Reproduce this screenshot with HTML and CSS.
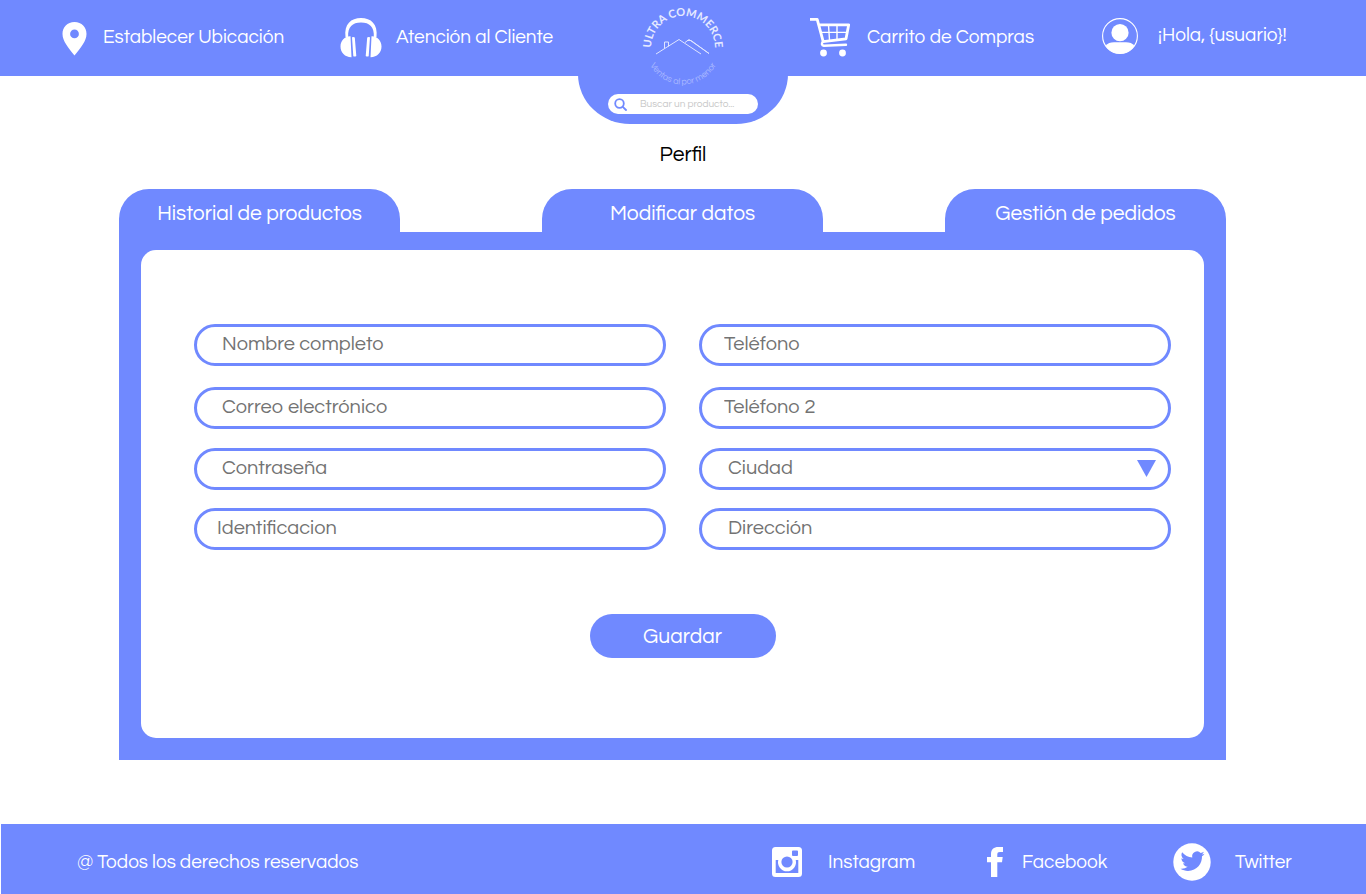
FILE: index.html
```html
<!DOCTYPE html>
<html lang="es">
<head>
<meta charset="utf-8">
<meta name="viewport" content="width=device-width, initial-scale=1">
<title>Perfil - Ultra Commerce</title>
<link rel="stylesheet" href="styles.css">
</head>
<body>
<header class="topbar">
  <a class="nav-link nav-link--location" href="#">
    <svg width="25" height="34" viewBox="0 -1 25 34" overflow="visible" fill="currentColor" aria-hidden="true"><path fill-rule="evenodd" d="M12.500 0C5.300 0 0.500 5 0.500 12c0 7 6 14 12 21.500 6-7.500 12-14.500 12-21.500 0-7-4.800-12-12-12zm0 7.500a4.400 4.400 0 1 1 0 8.800 4.400 4.400 0 0 1 0-8.800z"/></svg>
    <span class="nav-text">Establecer Ubicación</span>
  </a>
  <a class="nav-link nav-link--support" href="#">
    <svg width="42" height="40" viewBox="0 0 42 40" fill="currentColor" aria-hidden="true">
      <path d="M5.500 19C4 6 11 0 21 0s17 6 15.500 19h-2.700C34.500 9 29.500 4.500 21 4.500S7.500 9 8.200 19z"/>
      <path d="M10.500 18.300C5 18 .5 22.500 .5 28.500S5 39.300 11.500 39.200zM31.500 18.300C37 18 41.500 22.500 41.500 28.500S37 39.300 30.500 39.200z"/>
      <path d="M12 19.300q2-.6 2.800.2L16.300 38q-1.400 1-3 .2zM30 19.300q-2-.6-2.800.2L25.700 38q1.400 1 3 .2z"/>
    </svg>
    <span class="nav-text">Atención al Cliente</span>
  </a>
  <div class="brand">
    <a class="brand-logo" href="#">
      <svg width="92" height="86" viewBox="0 0 92 86" role="img" aria-label="Ultra Commerce">
        <path id="arc-top" fill="none" d="M14 52V48A32 32 0 1 1 78 48V52"/>
        <path id="arc-bottom" fill="none" d="M8.500 47A37.500 37.500 0 0 0 83.500 47"/>
        <text class="brand-name"><textPath href="#arc-top" startOffset="50%" text-anchor="middle">ULTRA COMMERCE</textPath></text>
        <text class="brand-tagline"><textPath href="#arc-bottom" startOffset="50%" text-anchor="middle">Ventas al por menor</textPath></text>
        <path fill="none" stroke="#dfe5ff" stroke-width="1" d="M19 54l23-14.500L64 54M27.500 48.500V42h4v4.500M48 42.500l4-3L72 53.500M50 40.500h4l18 13"/>
      </svg>
    </a>
    <form class="search" role="search">
      <svg width="13" height="13" viewBox="0 0 13 13" fill="none" stroke="currentColor" stroke-width="1.800" stroke-linecap="round" aria-hidden="true"><circle cx="5.500" cy="5.500" r="4.300"/><path d="M8.800 8.800l3.200 3.200"/></svg>
      <input class="search-input" type="search" placeholder="Buscar un producto..." aria-label="Buscar un producto">
    </form>
  </div>
  <a class="nav-link nav-link--cart" href="#">
    <svg width="42" height="40" viewBox="0 1 42 40" fill="none" stroke="currentColor" aria-hidden="true">
      <path stroke-width="2.800" stroke-linejoin="round" d="M1 2.400h7.200l6 22.200L37 21.800 39.700 7.800H10"/>
      <path stroke-width="1.400" d="M19.500 8l1 15M28 8v15M11.500 15.400h27"/>
      <path stroke-width="2.400" stroke-linecap="round" d="M14 24.500c-1.800 2-1.300 4 .8 4.200l22.200-.900"/>
      <circle cx="14.500" cy="36" r="3.400" fill="currentColor" stroke="none"/><circle cx="33.500" cy="36" r="3.400" fill="currentColor" stroke="none"/>
    </svg>
    <span class="nav-text">Carrito de Compras</span>
  </a>
  <a class="nav-link nav-link--user" href="#">
    <svg width="36" height="36" viewBox="0 0 36 36" aria-hidden="true">
      <circle cx="18" cy="18" r="17.400" fill="none" stroke="currentColor" stroke-width="1.100"/>
      <circle cx="18" cy="14.700" r="8.600" fill="currentColor"/>
      <path fill="currentColor" d="M3.500 28C5.500 25.300 8.500 24.300 12 24.300h12c3.500 0 6.500 1 8.500 3.700A17.500 17.500 0 0 1 3.500 28z"/>
    </svg>
    <span class="nav-text">¡Hola, {usuario}!</span>
  </a>
</header>

<main class="page">
  <h1 class="page-title">Perfil</h1>
  <nav class="tabs" aria-label="Perfil">
    <button class="tab tab--history" type="button">Historial de productos</button>
    <button class="tab tab--edit" type="button">Modificar datos</button>
    <button class="tab tab--orders" type="button">Gestión de pedidos</button>
  </nav>
  <section class="panel">
    <form class="profile">
      <div class="fields">
        <input class="field" type="text" placeholder="Nombre completo" aria-label="Nombre completo">
        <input class="field field--phone" type="tel" placeholder="Teléfono" aria-label="Teléfono">
        <input class="field" type="email" placeholder="Correo electrónico" aria-label="Correo electrónico">
        <input class="field field--phone" type="tel" placeholder="Teléfono 2" aria-label="Teléfono 2">
        <input class="field" type="password" placeholder="Contraseña" aria-label="Contraseña">
        <div class="select-wrap">
          <select class="field field--inset" aria-label="Ciudad"><option>Ciudad</option></select>
          <svg class="select-arrow" width="20" height="18" viewBox="0 0 20 18" aria-hidden="true"><path fill="currentColor" d="M0 0h19L9.500 17z"/></svg>
        </div>
        <input class="field field--id" type="text" placeholder="Identificacion" aria-label="Identificacion">
        <input class="field field--inset" type="text" placeholder="Dirección" aria-label="Dirección">
      </div>
      <button class="save" type="submit">Guardar</button>
    </form>
  </section>
</main>

<footer class="footer">
  <p class="copyright">@ Todos los derechos reservados</p>
  <a class="social social--instagram" href="#">
    <svg width="30" height="30" viewBox="0 0 30 30" aria-hidden="true">
      <path fill="currentColor" fill-rule="evenodd" d="M3.500 0h23A3.500 3.500 0 0 1 30 3.500v23a3.500 3.500 0 0 1-3.500 3.500h-23A3.500 3.500 0 0 1 0 26.500v-23A3.500 3.500 0 0 1 3.500 0zM21 3.500q-1 0-1 1V8q0 1 1 1h4q1 0 1-1V4.500q0-1-1-1zM3.700 13v13h22.600V13h-2.600A9 9 0 1 1 6.300 13z"/>
      <circle cx="15" cy="15" r="5.600" fill="#7089ff"/>
    </svg>
    <span>Instagram</span>
  </a>
  <a class="social social--facebook" href="#">
    <svg width="16" height="30" viewBox="0 0 16 30" fill="currentColor" aria-hidden="true"><path d="M4 30V15.200H0V10h4V7.200C4 2.500 6.800 0 11.300 0H16v5h-3c-2 0-2.700.8-2.700 2.500V10H15.700L15 15.200h-4.700V30z"/></svg>
    <span>Facebook</span>
  </a>
  <a class="social social--twitter" href="#">
    <svg width="38" height="38" viewBox="0 0 38 38" aria-hidden="true">
      <circle cx="19" cy="19" r="18.700" fill="currentColor"/>
      <path fill="#7089ff" transform="translate(7 7.500)" d="M24.500 3.200c-.9.400-1.800.7-2.800.8 1-.6 1.800-1.600 2.100-2.700-1 .6-2 1-3.100 1.200A4.930 4.930 0 0 0 12.300 7C8.200 6.800 4.600 4.900 2.100 1.800c-1.300 2.200-.7 5.100 1.500 6.600-.8 0-1.600-.2-2.200-.6 0 2.300 1.600 4.400 3.900 4.900-.7.200-1.500.2-2.200.1.600 2 2.400 3.400 4.600 3.400A9.900 9.900 0 0 1 .500 18.200c2.200 1.400 4.800 2.200 7.500 2.200 9.100 0 14.300-7.700 14-14.600 1-.7 1.800-1.600 2.500-2.600z"/>
    </svg>
    <span>Twitter</span>
  </a>
</footer>
</body>
</html>
```
FILE: styles.css
```css
:root {
  --blue: #7089ff;
  --gray: #737373;
}

* { box-sizing: border-box; }

body {
  margin: 0;
  min-height: 100vh;
  display: flex;
  flex-direction: column;
  background: #fff;
  color: #000;
  font-family: Questrial, Inter, "Open Sans", sans-serif;
  font-size: 19px;
  font-weight: 300;
}

a { color: inherit; text-decoration: none; }
svg { display: block; flex: none; }
input, select, button { font: inherit; }

/* Header */
.topbar {
  display: grid;
  grid-template-columns: 278fr 238fr 231fr 293fr 264fr;
  grid-template-rows: 76px;
  align-items: center;
  height: 76px;
  padding-left: 62px;
  background: var(--blue);
  color: #fff;
}

.nav-link {
  display: flex;
  align-items: center;
  gap: 16px;
  white-space: nowrap;
}

.nav-text { padding-bottom: 2px; }
.nav-link--support { gap: 14px; }
.nav-link--user { gap: 20px; padding-bottom: 4px; }

.brand {
  align-self: start;
  display: flex;
  flex-direction: column;
  align-items: center;
  gap: 8px;
  width: 210px;
  height: 124px;
  border-radius: 0 0 52px 52px / 0 0 50px 50px;
  background: var(--blue);
}

.brand-name {
  font-family: Lato, sans-serif;
  font-size: 11px;
  font-weight: 700;
  fill: #e6eaff;
}

.brand-tagline {
  font-size: 9px;
  fill: #a9b8ff;
}

.search {
  display: flex;
  align-items: center;
  gap: 13px;
  width: 150px;
  height: 20px;
  padding: 0 6px;
  border-radius: 10px;
  background: #fff;
  color: var(--blue);
}

.search-input {
  flex: 1;
  min-width: 0;
  padding: 0;
  border: 0;
  outline: 0;
  background: none;
  font-size: 10px;
}

.search-input::placeholder { color: #c8c8c8; opacity: 1; }

/* Profile */
.page {
  flex: 1;
  padding: 67px 140px 64px 119px;
}

.page-title {
  margin: 0 0 22px 21px;
  font-size: 21px;
  font-weight: 400;
  line-height: 24px;
  text-align: center;
}

.tabs {
  display: grid;
  grid-template-columns: 281fr 142fr 281fr 122fr 281fr;
}

.tab {
  height: 43px;
  padding: 7px 0 0;
  border: 0;
  border-radius: 30px 30px 0 0;
  background: var(--blue);
  color: #fff;
  font-size: 21px;
  line-height: 24px;
}

.tab--history { grid-column: 1; }
.tab--edit { grid-column: 3; }
.tab--orders { grid-column: 5; }

.panel {
  padding: 18px 22px 22px;
  background: var(--blue);
}

.profile {
  display: flex;
  flex-direction: column;
  align-items: center;
  gap: 64px;
  padding: 74px 33px 80px 53px;
  border-radius: 15px;
  background: #fff;
}

.fields {
  display: grid;
  grid-template-columns: 1fr 1fr;
  grid-template-rows: 63px 61px 60px 42px;
  column-gap: 33px;
  width: 100%;
}

.field {
  width: 100%;
  height: 42px;
  padding: 0 25px 3px;
  border: 3px solid var(--blue);
  border-radius: 21px;
  outline: 0;
  background: #fff;
  color: var(--gray);
  font-size: 20px;
}

.field::placeholder { color: var(--gray); opacity: 1; }
.field--id { padding-left: 20px; }
.field--phone { padding-left: 22px; }
.field--inset { padding-left: 26px; appearance: none; }

.select-wrap { position: relative; }

.select-arrow {
  position: absolute;
  top: 12px;
  right: 14px;
  color: var(--blue);
  pointer-events: none;
}

.save {
  width: 186px;
  height: 44px;
  padding: 0;
  border: 0;
  border-radius: 22px;
  background: var(--blue);
  color: #fff;
  font-size: 21px;
}

/* Footer */
.footer {
  display: grid;
  grid-template-columns: 695fr 215fr 186fr 193fr;
  align-items: center;
  height: 70px;
  margin-left: 1px;
  padding: 6px 0 0 76px;
  background: var(--blue);
  color: #fff;
}

.copyright { margin: 0; }

.social {
  display: flex;
  align-items: center;
  gap: 24px;
}

.social--instagram { gap: 26px; }
.social--facebook { gap: 19px; }
```
